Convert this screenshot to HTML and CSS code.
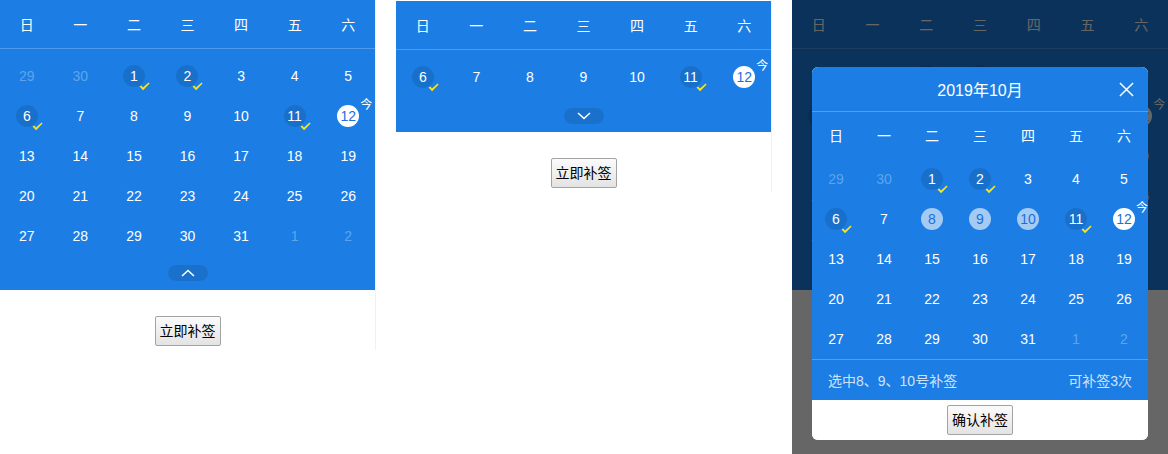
FILE: index.html
```html
<!DOCTYPE html>
<html lang="zh-CN">
<head>
<meta charset="utf-8">
<title>补签日历</title>
<link rel="stylesheet" href="styles.css">
</head>
<body>
<svg width="0" height="0" class="defs" aria-hidden="true">
  <defs>
    <symbol id="check" viewBox="0 0 11 9"><path d="M0.5 4.6 L2.2 3.6 L4 5.4 L9.6 0.4 L10.6 1.4 L4.1 8.3 Z" fill="#ffe414"/></symbol>
    <symbol id="up" viewBox="0 0 14 8"><polyline points="1,7 7,1.5 13,7" fill="none" stroke="#fff" stroke-width="1.6"/></symbol>
    <symbol id="down" viewBox="0 0 14 8"><polyline points="1,1 7,6.5 13,1" fill="none" stroke="#fff" stroke-width="1.6"/></symbol>
  </defs>
</svg>
<div class="page">

  <!-- Panel A: expanded calendar -->
  <section class="panel">
    <div class="cal">
      <div class="cal-week"><span>日</span><span>一</span><span>二</span><span>三</span><span>四</span><span>五</span><span>六</span></div>
      <div class="cal-days">
        <div class="day"><span class="num is-muted">29</span></div>
        <div class="day"><span class="num is-muted">30</span></div>
        <div class="day"><span class="num is-signed">1<svg class="check"><use href="#check"/></svg></span></div>
        <div class="day"><span class="num is-signed">2<svg class="check"><use href="#check"/></svg></span></div>
        <div class="day"><span class="num">3</span></div>
        <div class="day"><span class="num">4</span></div>
        <div class="day"><span class="num">5</span></div>
        <div class="day"><span class="num is-signed">6<svg class="check"><use href="#check"/></svg></span></div>
        <div class="day"><span class="num">7</span></div>
        <div class="day"><span class="num">8</span></div>
        <div class="day"><span class="num">9</span></div>
        <div class="day"><span class="num">10</span></div>
        <div class="day"><span class="num is-signed">11<svg class="check"><use href="#check"/></svg></span></div>
        <div class="day"><span class="num is-today">12<em class="today-tag">今</em></span></div>
        <div class="day"><span class="num">13</span></div>
        <div class="day"><span class="num">14</span></div>
        <div class="day"><span class="num">15</span></div>
        <div class="day"><span class="num">16</span></div>
        <div class="day"><span class="num">17</span></div>
        <div class="day"><span class="num">18</span></div>
        <div class="day"><span class="num">19</span></div>
        <div class="day"><span class="num">20</span></div>
        <div class="day"><span class="num">21</span></div>
        <div class="day"><span class="num">22</span></div>
        <div class="day"><span class="num">23</span></div>
        <div class="day"><span class="num">24</span></div>
        <div class="day"><span class="num">25</span></div>
        <div class="day"><span class="num">26</span></div>
        <div class="day"><span class="num">27</span></div>
        <div class="day"><span class="num">28</span></div>
        <div class="day"><span class="num">29</span></div>
        <div class="day"><span class="num">30</span></div>
        <div class="day"><span class="num">31</span></div>
        <div class="day"><span class="num is-muted">1</span></div>
        <div class="day"><span class="num is-muted">2</span></div>
      </div>
      <div class="cal-toggle"><span class="pill"><svg class="chev"><use href="#up"/></svg></span></div>
    </div>
    <div class="actions"><button class="btn" type="button">立即补签</button></div>
  </section>

  <!-- Panel B: collapsed calendar -->
  <section class="panel panel-b">
    <div class="cal">
      <div class="cal-week"><span>日</span><span>一</span><span>二</span><span>三</span><span>四</span><span>五</span><span>六</span></div>
      <div class="cal-days">
        <div class="day"><span class="num is-signed">6<svg class="check"><use href="#check"/></svg></span></div>
        <div class="day"><span class="num">7</span></div>
        <div class="day"><span class="num">8</span></div>
        <div class="day"><span class="num">9</span></div>
        <div class="day"><span class="num">10</span></div>
        <div class="day"><span class="num is-signed">11<svg class="check"><use href="#check"/></svg></span></div>
        <div class="day"><span class="num is-today">12<em class="today-tag">今</em></span></div>
      </div>
      <div class="cal-toggle is-collapsed"><span class="pill"><svg class="chev"><use href="#down"/></svg></span></div>
    </div>
    <div class="actions"><button class="btn" type="button">立即补签</button></div>
  </section>

  <!-- Panel C: calendar with make-up dialog -->
  <section class="panel panel-c">
    <div class="cal">
      <div class="cal-week"><span>日</span><span>一</span><span>二</span><span>三</span><span>四</span><span>五</span><span>六</span></div>
      <div class="cal-days">
        <div class="day"><span class="num is-muted">29</span></div>
        <div class="day"><span class="num is-muted">30</span></div>
        <div class="day"><span class="num is-signed">1<svg class="check"><use href="#check"/></svg></span></div>
        <div class="day"><span class="num is-signed">2<svg class="check"><use href="#check"/></svg></span></div>
        <div class="day"><span class="num">3</span></div>
        <div class="day"><span class="num">4</span></div>
        <div class="day"><span class="num">5</span></div>
        <div class="day"><span class="num is-signed">6<svg class="check"><use href="#check"/></svg></span></div>
        <div class="day"><span class="num">7</span></div>
        <div class="day"><span class="num">8</span></div>
        <div class="day"><span class="num">9</span></div>
        <div class="day"><span class="num">10</span></div>
        <div class="day"><span class="num is-signed">11<svg class="check"><use href="#check"/></svg></span></div>
        <div class="day"><span class="num is-today">12<em class="today-tag">今</em></span></div>
        <div class="day"><span class="num">13</span></div>
        <div class="day"><span class="num">14</span></div>
        <div class="day"><span class="num">15</span></div>
        <div class="day"><span class="num">16</span></div>
        <div class="day"><span class="num">17</span></div>
        <div class="day"><span class="num">18</span></div>
        <div class="day"><span class="num">19</span></div>
        <div class="day"><span class="num">20</span></div>
        <div class="day"><span class="num">21</span></div>
        <div class="day"><span class="num">22</span></div>
        <div class="day"><span class="num">23</span></div>
        <div class="day"><span class="num">24</span></div>
        <div class="day"><span class="num">25</span></div>
        <div class="day"><span class="num">26</span></div>
        <div class="day"><span class="num">27</span></div>
        <div class="day"><span class="num">28</span></div>
        <div class="day"><span class="num">29</span></div>
        <div class="day"><span class="num">30</span></div>
        <div class="day"><span class="num">31</span></div>
        <div class="day"><span class="num is-muted">1</span></div>
        <div class="day"><span class="num is-muted">2</span></div>
      </div>
      <div class="cal-toggle"><span class="pill"><svg class="chev"><use href="#up"/></svg></span></div>
    </div>
    <div class="actions is-covered" aria-hidden="true"><button class="btn" type="button" tabindex="-1">立即补签</button></div>

    <div class="mask">
      <div class="modal">
        <div class="modal-head">
          <span class="modal-title">2019年10月</span>
          <svg class="close" viewBox="0 0 16 16"><path d="M1 1 L15 15 M15 1 L1 15" stroke="#fff" stroke-width="1.6" fill="none"/></svg>
        </div>
        <div class="cal-week modal-week"><span>日</span><span>一</span><span>二</span><span>三</span><span>四</span><span>五</span><span>六</span></div>
        <div class="cal-days modal-days">
          <div class="day"><span class="num is-muted">29</span></div>
          <div class="day"><span class="num is-muted">30</span></div>
          <div class="day"><span class="num is-signed">1<svg class="check"><use href="#check"/></svg></span></div>
          <div class="day"><span class="num is-signed">2<svg class="check"><use href="#check"/></svg></span></div>
          <div class="day"><span class="num">3</span></div>
          <div class="day"><span class="num">4</span></div>
          <div class="day"><span class="num">5</span></div>
          <div class="day"><span class="num is-signed">6<svg class="check"><use href="#check"/></svg></span></div>
          <div class="day"><span class="num">7</span></div>
          <div class="day"><span class="num is-picked">8</span></div>
          <div class="day"><span class="num is-picked">9</span></div>
          <div class="day"><span class="num is-picked">10</span></div>
          <div class="day"><span class="num is-signed">11<svg class="check"><use href="#check"/></svg></span></div>
          <div class="day"><span class="num is-today">12<em class="today-tag">今</em></span></div>
          <div class="day"><span class="num">13</span></div>
          <div class="day"><span class="num">14</span></div>
          <div class="day"><span class="num">15</span></div>
          <div class="day"><span class="num">16</span></div>
          <div class="day"><span class="num">17</span></div>
          <div class="day"><span class="num">18</span></div>
          <div class="day"><span class="num">19</span></div>
          <div class="day"><span class="num">20</span></div>
          <div class="day"><span class="num">21</span></div>
          <div class="day"><span class="num">22</span></div>
          <div class="day"><span class="num">23</span></div>
          <div class="day"><span class="num">24</span></div>
          <div class="day"><span class="num">25</span></div>
          <div class="day"><span class="num">26</span></div>
          <div class="day"><span class="num">27</span></div>
          <div class="day"><span class="num">28</span></div>
          <div class="day"><span class="num">29</span></div>
          <div class="day"><span class="num">30</span></div>
          <div class="day"><span class="num">31</span></div>
          <div class="day"><span class="num is-muted">1</span></div>
          <div class="day"><span class="num is-muted">2</span></div>
        </div>
        <div class="modal-foot"><span>选中8、9、10号补签</span><span>可补签3次</span></div>
        <div class="modal-actions"><button class="btn" type="button">确认补签</button></div>
      </div>
    </div>
  </section>

</div>
</body>
</html>
```

FILE: styles.css
```css
* { box-sizing: border-box; }

html, body {
  margin: 0;
  padding: 0;
  background: #fff;
  font-family: "Liberation Sans", "Noto Sans CJK SC", sans-serif;
  font-size: 14px;
}

.defs { position: absolute; width: 0; height: 0; overflow: hidden; }

.page {
  display: flex;
  align-items: flex-start;
  gap: 21px;
  height: 454px;
  overflow: hidden;
}

.panel {
  width: 375px;
  flex: 0 0 375px;
  box-shadow: 1px 0 0 #f1f1f1;
}

.panel-b { margin-top: 1px; }

.panel-c {
  position: relative;
  flex: 0 0 376px;
  width: 376px;
  height: 454px;
  box-shadow: none;
}

/* calendar */
.cal {
  background: #1c7ee4;
  color: #fff;
}

.cal-week {
  display: grid;
  grid-template-columns: repeat(7, 1fr);
  height: 49px;
  align-items: center;
  text-align: center;
  border-bottom: 1px solid rgba(255, 255, 255, 0.22);
  font-size: 14px;
}

.cal-days {
  display: grid;
  grid-template-columns: repeat(7, 1fr);
  grid-auto-rows: 40px;
  padding-top: 7px;
}

.day {
  display: flex;
  align-items: center;
  justify-content: center;
}

.num {
  position: relative;
  width: 22px;
  height: 22px;
  border-radius: 50%;
  display: flex;
  align-items: center;
  justify-content: center;
  font-size: 14px;
  line-height: 1;
  color: #fff;
}

.num.is-muted { color: rgba(255, 255, 255, 0.3); }

.num.is-signed { background: rgba(0, 0, 0, 0.11); }

.num.is-picked {
  background: rgba(255, 255, 255, 0.6);
  color: #1c6fdc;
}

.num.is-today {
  background: #fff;
  color: #1c6fdc;
}

.check {
  position: absolute;
  right: -5px;
  bottom: -4px;
  width: 11px;
  height: 9px;
}

.today-tag {
  position: absolute;
  left: 23px;
  top: -6px;
  font-style: normal;
  font-size: 12px;
  line-height: 12px;
  color: #fff;
  white-space: nowrap;
}

.cal-toggle {
  height: 34px;
  display: flex;
  align-items: center;
  justify-content: center;
}

.cal-toggle.is-collapsed {
  height: 35px;
  padding-top: 3px;
}

.pill {
  width: 40px;
  height: 16px;
  border-radius: 8px;
  background: rgba(0, 0, 0, 0.1);
  display: flex;
  align-items: center;
  justify-content: center;
}

.chev { width: 14px; height: 8px; display: block; }

/* actions */
.actions {
  display: flex;
  justify-content: center;
  padding: 26px 0 4px;
}

.actions.is-covered { visibility: hidden; }

.btn {
  height: 30px;
  padding: 0 4px;
  font-family: "Liberation Sans", "Noto Sans CJK SC", sans-serif;
  font-size: 14px;
  line-height: 28px;
  color: #000;
  background: linear-gradient(#fbfbfb, #e3e3e3);
  border: 1px solid #a3a3a3;
  border-radius: 2px;
}

/* mask + modal */
.mask {
  position: absolute;
  inset: 0;
  background: rgba(0, 0, 0, 0.6);
  display: flex;
  justify-content: center;
  align-items: flex-start;
  padding-top: 67px;
}

.modal {
  width: 336px;
  border-radius: 6px;
  overflow: hidden;
  background: #fff;
}

.modal-head {
  position: relative;
  height: 45px;
  background: #1c7ee4;
  color: #fff;
  border-bottom: 1px solid rgba(255, 255, 255, 0.25);
  display: flex;
  align-items: center;
  justify-content: center;
}

.modal-title { font-size: 16px; }

.close {
  position: absolute;
  right: 14px;
  top: 15px;
  width: 15px;
  height: 15px;
}

.modal-week {
  background: #1c7ee4;
  color: #fff;
  height: 46px;
  border-bottom: none;
}

.modal-days {
  background: #1c7ee4;
  padding-top: 1px;
}

.modal-foot {
  height: 41px;
  background: #1c7ee4;
  border-top: 1px solid rgba(255, 255, 255, 0.25);
  display: flex;
  align-items: center;
  justify-content: space-between;
  padding: 0 16px;
  color: rgba(255, 255, 255, 0.8);
  font-size: 14px;
}

.modal-actions {
  height: 40px;
  display: flex;
  align-items: center;
  justify-content: center;
  background: #fff;
}
```
